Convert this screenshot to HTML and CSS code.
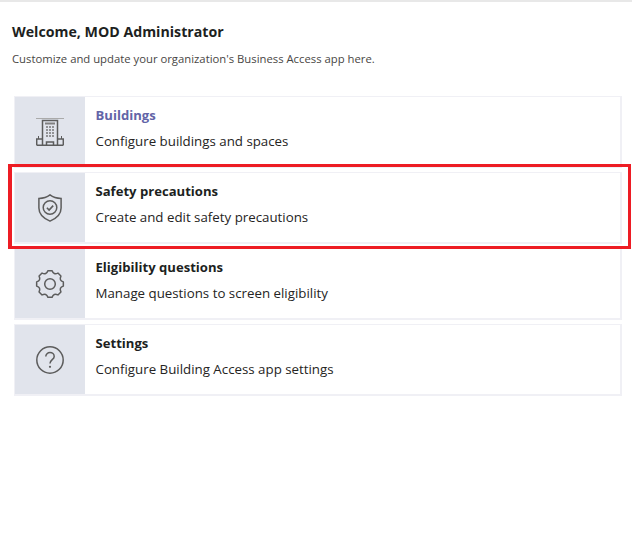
FILE: index.html
```html
<!DOCTYPE html>
<html lang="en">
<head>
<meta charset="UTF-8" />
<title>Business Access admin</title>
<link rel="stylesheet" href="styles.css">
</head>
<body>
<div class="page">
  <h1 class="welcome">Welcome, MOD Administrator</h1>
  <p class="intro">Customize and update your organization's Business Access app here.</p>

  <div class="cards">
    <!-- Buildings -->
    <div class="card">
      <div class="card-icon">
        <svg width="28" height="28" viewBox="0 0 28 28" fill="none" stroke="#5c5c5c" stroke-width="1.5">
          <path d="M0 .5H28" stroke="#aaa" stroke-width="1" />
          <path d="M6.5 27V2.5H21.5V27" />
          <path d="M9 5.5H19" stroke-width="2" stroke="#808080" />
          <path d="M.7 27.3V21H6.5M21.5 21H27.3V27.3M.7 27.3H27.3" />
          <path d="M2.5 21V18M25.5 21V18" stroke-width="1" />
          <path d="M10.5 27V24H17.5V27" />
          <path d="M10 9H12M13 9H15M16 9H18M10 12H12M13 12H15M16 12H18M10 15H12M13 15H15M16 15H18M10 18H12M13 18H15M16 18H18" stroke="#777" stroke-width="1.5" />
        </svg>
      </div>
      <div class="card-text">
        <div class="card-title card-title-active">Buildings</div>
        <div class="card-desc">Configure buildings and spaces</div>
      </div>
    </div>

    <!-- Safety precautions, marked with the red box -->
    <div class="card card-marked">
      <div class="card-icon">
        <svg width="24" height="28" viewBox="0 0 24 28" fill="none" stroke="#5c5c5c" stroke-width="1.5">
          <path d="M12 .9C8.8 3.3 5 4.3 .9 4.5V14C.9 20 5.5 24.4 12 27.1C18.5 24.4 23.1 20 23.1 14V4.5C19 4.3 15.2 3.3 12 .9Z" />
          <circle cx="12" cy="13.5" r="6.8" />
          <path d="M8.9 13.8L11.1 16L15.2 11.6" stroke-width="1.6" />
        </svg>
      </div>
      <div class="card-text">
        <div class="card-title">Safety precautions</div>
        <div class="card-desc">Create and edit safety precautions</div>
      </div>
    </div>

    <!-- Eligibility questions -->
    <div class="card">
      <div class="card-icon">
        <svg width="30" height="30" viewBox="0 0 30 30" fill="none" stroke="#5c5c5c" stroke-width="1.5" stroke-linejoin="round">
          <path d="M12.89 1.66L17.11 1.66Q18.64 6.22 22.94 4.08L25.92 7.06Q23.78 11.36 28.34 12.89L28.34 17.11Q23.78 18.64 25.92 22.94L22.94 25.92Q18.64 23.78 17.11 28.34L12.89 28.34Q11.36 23.78 7.06 25.92L4.08 22.94Q6.22 18.64 1.66 17.11L1.66 12.89Q6.22 11.36 4.08 7.06L7.06 4.08Q11.36 6.22 12.89 1.66Z" />
          <circle cx="15" cy="15" r="5.3" />
        </svg>
      </div>
      <div class="card-text">
        <div class="card-title">Eligibility questions</div>
        <div class="card-desc">Manage questions to screen eligibility</div>
      </div>
    </div>

    <!-- Settings -->
    <div class="card">
      <div class="card-icon">
        <svg width="28" height="28" viewBox="0 0 28 28" fill="none" stroke="#5c5c5c" stroke-width="1.5">
          <circle cx="14" cy="14" r="13.2" />
          <path d="M9.8 10.6C9.8 8.2 11.7 6.6 14 6.6C16.3 6.6 18.2 8.2 18.2 10.4C18.2 13.6 14 13.6 14 17.4" />
          <circle cx="14" cy="20.8" r="1.1" fill="#5c5c5c" stroke="none" />
        </svg>
      </div>
      <div class="card-text">
        <div class="card-title">Settings</div>
        <div class="card-desc">Configure Building Access app settings</div>
      </div>
    </div>
  </div>
</div>
</body>
</html>
```

FILE: styles.css
```css
html, body {
  margin: 0;
  background: #fff;
}
body {
  font-family: "Open Sans", "Noto Sans", sans-serif;
  color: #252423;
}
.page {
  border-top: 2px solid #e8e8e8;
  padding: 20px 10px 0 12px;
  height: 520px;
}
.welcome {
  margin: 0;
  font-size: 14.2px;
  line-height: 20px;
  font-weight: 700;
  color: #201f1e;
}
.intro {
  margin: 8px 0 0;
  font-size: 11.3px;
  line-height: 18px;
  color: #484644;
}
/* Four rows, 76px apart */
.cards {
  display: flex;
  flex-direction: column;
  gap: 4px;
  margin: 28px 0 0 2px;
}
.card {
  display: flex;
  height: 72px;
  box-sizing: border-box;
  border: 1px solid #f0f0f5;
  border-right-width: 2px;
  border-bottom-width: 2px;
  background: #fff;
}
.card-icon {
  width: 70px;
  flex: none;
  display: flex;
  align-items: center;
  justify-content: center;
  background: #e1e4ec;
}
.card-text {
  padding: 8px 10.5px;
}
.card-title {
  font-size: 13.1px;
  line-height: 20px;
  font-weight: 700;
  color: #201f1e;
}
.card-title-active {
  color: #6264a7;
}
.card-desc {
  margin-top: 6px;
  font-size: 13.3px;
  line-height: 20px;
}
/* Annotation box around the row */
.card-marked {
  position: relative;
}
.card-marked::after {
  content: "";
  position: absolute;
  top: -9px;
  left: -7px;
  right: -11px;
  bottom: -7px;
  border: 3px solid #ed1c24;
  border-left-width: 4px;
}
```
